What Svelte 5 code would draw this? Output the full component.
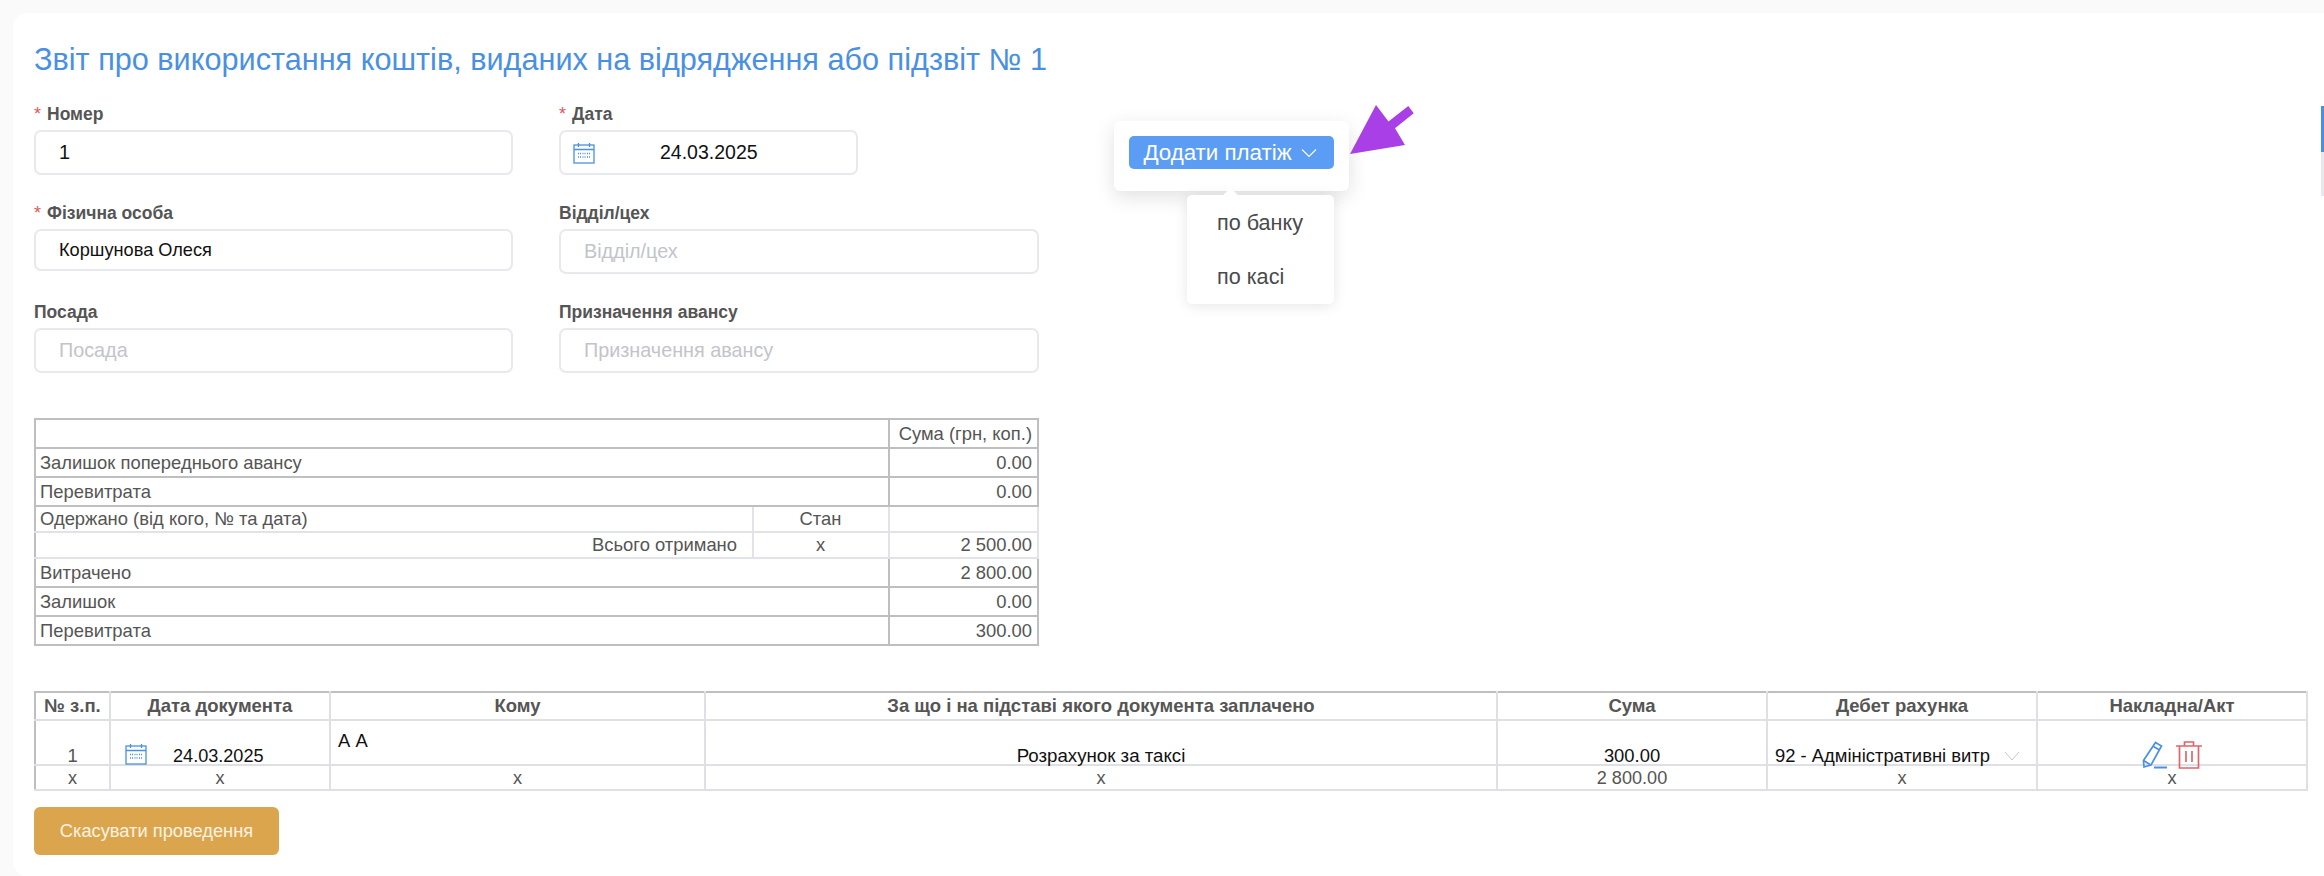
<script lang="ts">
  const summaryTop = [
    { label: "Залишок попереднього авансу", value: "0.00" },
    { label: "Перевитрата", value: "0.00" },
  ];
  const summaryBottom = [
    { label: "Витрачено", value: "2 800.00" },
    { label: "Залишок", value: "0.00" },
    { label: "Перевитрата", value: "300.00" },
  ];
  const columns = [
    "№ з.п.",
    "Дата документа",
    "Кому",
    "За що і на підставі якого документа заплачено",
    "Сума",
    "Дебет рахунка",
    "Накладна/Акт",
  ];
  const totals = ["x", "x", "x", "x", "2 800.00", "x", "x"];
</script>

{#snippet calendar()}
  <svg class="cal" viewBox="0 0 22 22" width="22" height="22" fill="none" stroke="#4a90e2" stroke-width="1.3" aria-hidden="true">
    <rect x="1" y="3" width="20" height="18" />
    <path d="M1 7.5h20M5.5 1v4M16.5 1v4" />
    <path d="M5 11.5h3M9.5 11.5h3M14 11.5h3M5 15h3M9.5 15h3M14 15h3" stroke-dasharray="1 1" />
  </svg>
{/snippet}

<div class="card">
  <h1>Звіт про використання коштів, виданих на відрядження або підзвіт № 1</h1>

  <div class="form">
    <div class="field">
      <span class="label"><i>*</i>Номер</span>
      <div class="input filled">1</div>
    </div>
    <div class="field">
      <span class="label"><i>*</i>Дата</span>
      <div class="input date">
        {@render calendar()}
        <span>24.03.2025</span>
      </div>
    </div>
    <div class="field">
      <span class="label"><i>*</i>Фізична особа</span>
      <div class="input filled short">Коршунова Олеся</div>
    </div>
    <div class="field">
      <span class="label">Відділ/цех</span>
      <div class="input">Відділ/цех</div>
    </div>
    <div class="field">
      <span class="label">Посада</span>
      <div class="input">Посада</div>
    </div>
    <div class="field">
      <span class="label">Призначення авансу</span>
      <div class="input">Призначення авансу</div>
    </div>
  </div>

  <table class="summary">
    <colgroup>
      <col style="width: 718px" />
      <col style="width: 136px" />
      <col style="width: 149px" />
    </colgroup>
    <tbody>
      <tr class="h29">
        <td colspan="2"></td>
        <td class="right">Сума (грн, коп.)</td>
      </tr>
      {#each summaryTop as row}
        <tr class="h29">
          <td colspan="2">{row.label}</td>
          <td class="right">{row.value}</td>
        </tr>
      {/each}
      <tr class="h26 soft">
        <td>Одержано (від кого, № та дата)</td>
        <td class="center">Стан</td>
        <td></td>
      </tr>
      <tr class="h26 soft">
        <td class="right total">Всього отримано</td>
        <td class="center">x</td>
        <td class="right">2 500.00</td>
      </tr>
      {#each summaryBottom as row}
        <tr class="h29">
          <td colspan="2">{row.label}</td>
          <td class="right">{row.value}</td>
        </tr>
      {/each}
    </tbody>
  </table>

  <table class="payments">
    <colgroup>
      <col style="width: 75px" />
      <col style="width: 220px" />
      <col style="width: 375px" />
      <col style="width: 792px" />
      <col style="width: 270px" />
      <col style="width: 270px" />
      <col style="width: 270px" />
    </colgroup>
    <thead>
      <tr>
        {#each columns as column}
          <th>{column}</th>
        {/each}
      </tr>
    </thead>
    <tbody>
      <tr class="entry">
        <td class="center"><div class="cell low">1</div></td>
        <td>
          <div class="cell low entry-date">
            {@render calendar()}
            <span>24.03.2025</span>
          </div>
        </td>
        <td><div class="cell high">А А</div></td>
        <td class="center"><div class="cell low dark wide">Розрахунок за таксі</div></td>
        <td class="center"><div class="cell low dark">300.00</div></td>
        <td>
          <div class="cell low dark account">
            <span>92 - Адміністративні витр</span>
            <svg viewBox="0 0 16 10" width="16" height="10" fill="none" stroke="#c4c6cc" stroke-width="1"><path d="M1 1l7 8 7-8" /></svg>
          </div>
        </td>
        <td>
          <div class="cell actions">
            <svg viewBox="0 0 26 28" width="26" height="28" fill="none" stroke="#4a90e2" stroke-width="1.7" aria-hidden="true">
              <path d="M13.5 1.500l6 3.500L9 24l-7 2-.5-6.500z" />
              <path d="M11.500 5.500l6 3.500M1.500 19.500L8 23.500" />
              <path d="M12 26.500h13" stroke-width="2" />
            </svg>
            <svg viewBox="0 0 26 28" width="26" height="28" fill="none" stroke="#e0656a" stroke-width="1.7" aria-hidden="true">
              <path d="M0 5h26M8.500 5V1h9v4M3.500 5v22h19V5M10 10v11M16 10v11" />
            </svg>
          </div>
        </td>
      </tr>
      <tr class="totals">
        {#each totals as value}
          <td class="center">{value}</td>
        {/each}
      </tr>
    </tbody>
  </table>

  <button type="button" class="cancel">Скасувати проведення</button>

  <div class="popover">
    <button type="button" class="add">
      Додати платіж
      <svg viewBox="0 0 16 10" width="16" height="10" fill="none" stroke="#fff" stroke-width="1.1"><path d="M1 1.500l7 7 7-7" /></svg>
    </button>
  </div>
  <div class="menu">
    <div class="menu-item">по банку</div>
    <div class="menu-item">по касі</div>
  </div>
  <svg class="arrow" viewBox="0 0 66 52" width="66" height="52" aria-hidden="true">
    <path d="M0 49L26 0 38.500 16.500 58.300 1 63.700 8.300 45 23.300 55 40z" fill="#a93fe6" />
  </svg>
  <div class="tab"></div>
</div>

<style>
  :global(body) {
    margin: 0;
    background: #fafafa;
    font-family: "Liberation Sans", Arial, sans-serif;
  }
  .card {
    margin: 13px 0 0 13px;
    height: 863px;
    box-sizing: border-box;
    padding: 29px 16px 0 21px;
    background: #fff;
    border-radius: 14px 0 0 14px;
    overflow: hidden;
    position: relative;
  }
  h1 {
    margin: 0;
    font-size: 30.650px;
    line-height: 34px;
    font-weight: 400;
    color: #4a90e2;
    white-space: nowrap;
  }
  .form {
    display: grid;
    grid-template-columns: 479px 480px;
    column-gap: 46px;
    row-gap: 27px;
    margin-top: 27px;
    width: 1005px;
  }
  .field {
    display: flex;
    flex-direction: column;
    align-items: flex-start;
    gap: 5px;
  }
  .label {
    font-size: 17.500px;
    line-height: 22px;
    font-weight: 700;
    color: #555;
  }
  .label i {
    color: #e0565b;
    font-style: normal;
    font-weight: 400;
    margin-right: 6px;
    font-size: 18px;
  }
  .input {
    box-sizing: border-box;
    width: 100%;
    height: 45px;
    border: 2.500px solid #e8e9ee;
    border-radius: 7px;
    padding: 0 23px;
    display: flex;
    align-items: center;
    font-size: 19.800px;
    color: #c2c4c9;
  }
  .input.filled {
    color: #111;
  }
  .input.short {
    height: 42px;
    font-size: 18.200px;
  }
  .input.date {
    width: 299px;
    padding: 0 0 0 12px;
    color: #111;
    font-size: 19.500px;
  }
  .input.date span {
    margin-left: 65px;
  }
  .cal {
    flex-shrink: 0;
  }
  table {
    border-collapse: collapse;
    table-layout: fixed;
    font-size: 18.400px;
    color: #555;
  }
  .summary {
    width: 1003px;
    margin-top: 45px;
  }
  .summary td {
    border: 2px solid #bfbfc2;
    padding: 0 5px 0 4px;
    white-space: nowrap;
  }
  .h29 {
    height: 29px;
  }
  .h26 {
    height: 26px;
  }
  .summary .soft td {
    border-color: #e2e3e8;
  }
  .summary .soft + .h29 td {
    border-top-color: #c6c6c9;
  }
  .summary .soft td:first-child {
    border-left-color: #bfbfc2;
  }
  .summary .soft:nth-child(4) td {
    border-top-color: #bfbfc2;
  }
  .right {
    text-align: right;
  }
  .center {
    text-align: center;
  }
  .summary .total {
    padding-right: 15px;
  }
  .payments {
    width: 2272px;
    margin-top: 45px;
    border: 2px solid #bfbfc2;
  }
  .payments th,
  .payments td {
    border: 2px solid #dfe0e5;
    padding: 0;
  }
  .payments thead th {
    height: 26px;
    font-size: 18.500px;
    font-weight: 700;
    color: #555;
    border-top-color: #bfbfc2;
  }
  .payments th:first-child,
  .payments td:first-child {
    border-left-color: #bfbfc2;
  }
  .entry td {
    height: 43px;
    vertical-align: bottom;
  }
  .cell {
    height: 43px;
    position: relative;
  }
  .low {
    display: flex;
    align-items: flex-end;
    justify-content: center;
    line-height: 16px;
  }
  .wide {
    font-size: 18.700px;
  }
  .dark {
    color: #111;
  }
  .high {
    padding: 10px 0 0 7px;
    box-sizing: border-box;
    color: #111;
    line-height: 20px;
  }
  .entry-date {
    justify-content: flex-start;
    padding-left: 14px;
    color: #111;
  }
  .entry-date span {
    margin-left: 26px;
    font-size: 18.100px;
  }
  .entry-date .cal {
    margin-bottom: -1px;
  }
  .account {
    justify-content: flex-start;
    padding-left: 7px;
    gap: 14px;
  }
  .account svg {
    margin-bottom: 3px;
  }
  .actions {
    display: flex;
    justify-content: center;
    align-items: flex-end;
    gap: 8px;
    margin-bottom: -5px;
  }
  .totals td {
    height: 23px;
    font-size: 18.100px;
    line-height: 18px;
  }
  .cancel {
    display: block;
    width: 245px;
    height: 48px;
    margin-top: 16px;
    border: 0;
    border-radius: 6px;
    background: #dba54e;
    color: #fbf3e2;
    font: inherit;
    font-size: 18.300px;
  }
  .popover {
    position: absolute;
    left: 1101px;
    top: 108px;
    width: 235px;
    height: 70px;
    box-sizing: border-box;
    padding: 15px;
    background: #fff;
    border-radius: 6px;
    box-shadow: 0 6px 20px rgba(0, 0, 0, 0.12);
  }
  .add {
    display: flex;
    align-items: center;
    justify-content: center;
    gap: 9px;
    width: 205px;
    height: 33px;
    padding: 0 3px 0 0;
    border: 0;
    border-radius: 5px;
    background: #5b9df5;
    color: #fff;
    font: inherit;
    font-size: 22.300px;
  }
  .menu {
    position: absolute;
    left: 1174px;
    top: 182px;
    width: 147px;
    height: 109px;
    padding-top: 1px;
    box-sizing: border-box;
    background: #fff;
    border-radius: 5px;
    box-shadow: 0 2px 14px rgba(0, 0, 0, 0.1);
  }
  .menu::before {
    content: "";
    position: absolute;
    left: 38px;
    top: -5px;
    width: 11px;
    height: 11px;
    background: #fff;
    transform: rotate(45deg);
  }
  .menu-item {
    position: relative;
    height: 54px;
    line-height: 54px;
    padding-left: 30px;
    font-size: 21.600px;
    color: #4a4a4a;
  }
  .arrow {
    position: absolute;
    left: 1337px;
    top: 92px;
  }
  .tab {
    position: absolute;
    right: 0;
    top: 93px;
    width: 3px;
    height: 90px;
    background: linear-gradient(#4a90e2 0 46px, #e8e8ec 46px);
  }
</style>
